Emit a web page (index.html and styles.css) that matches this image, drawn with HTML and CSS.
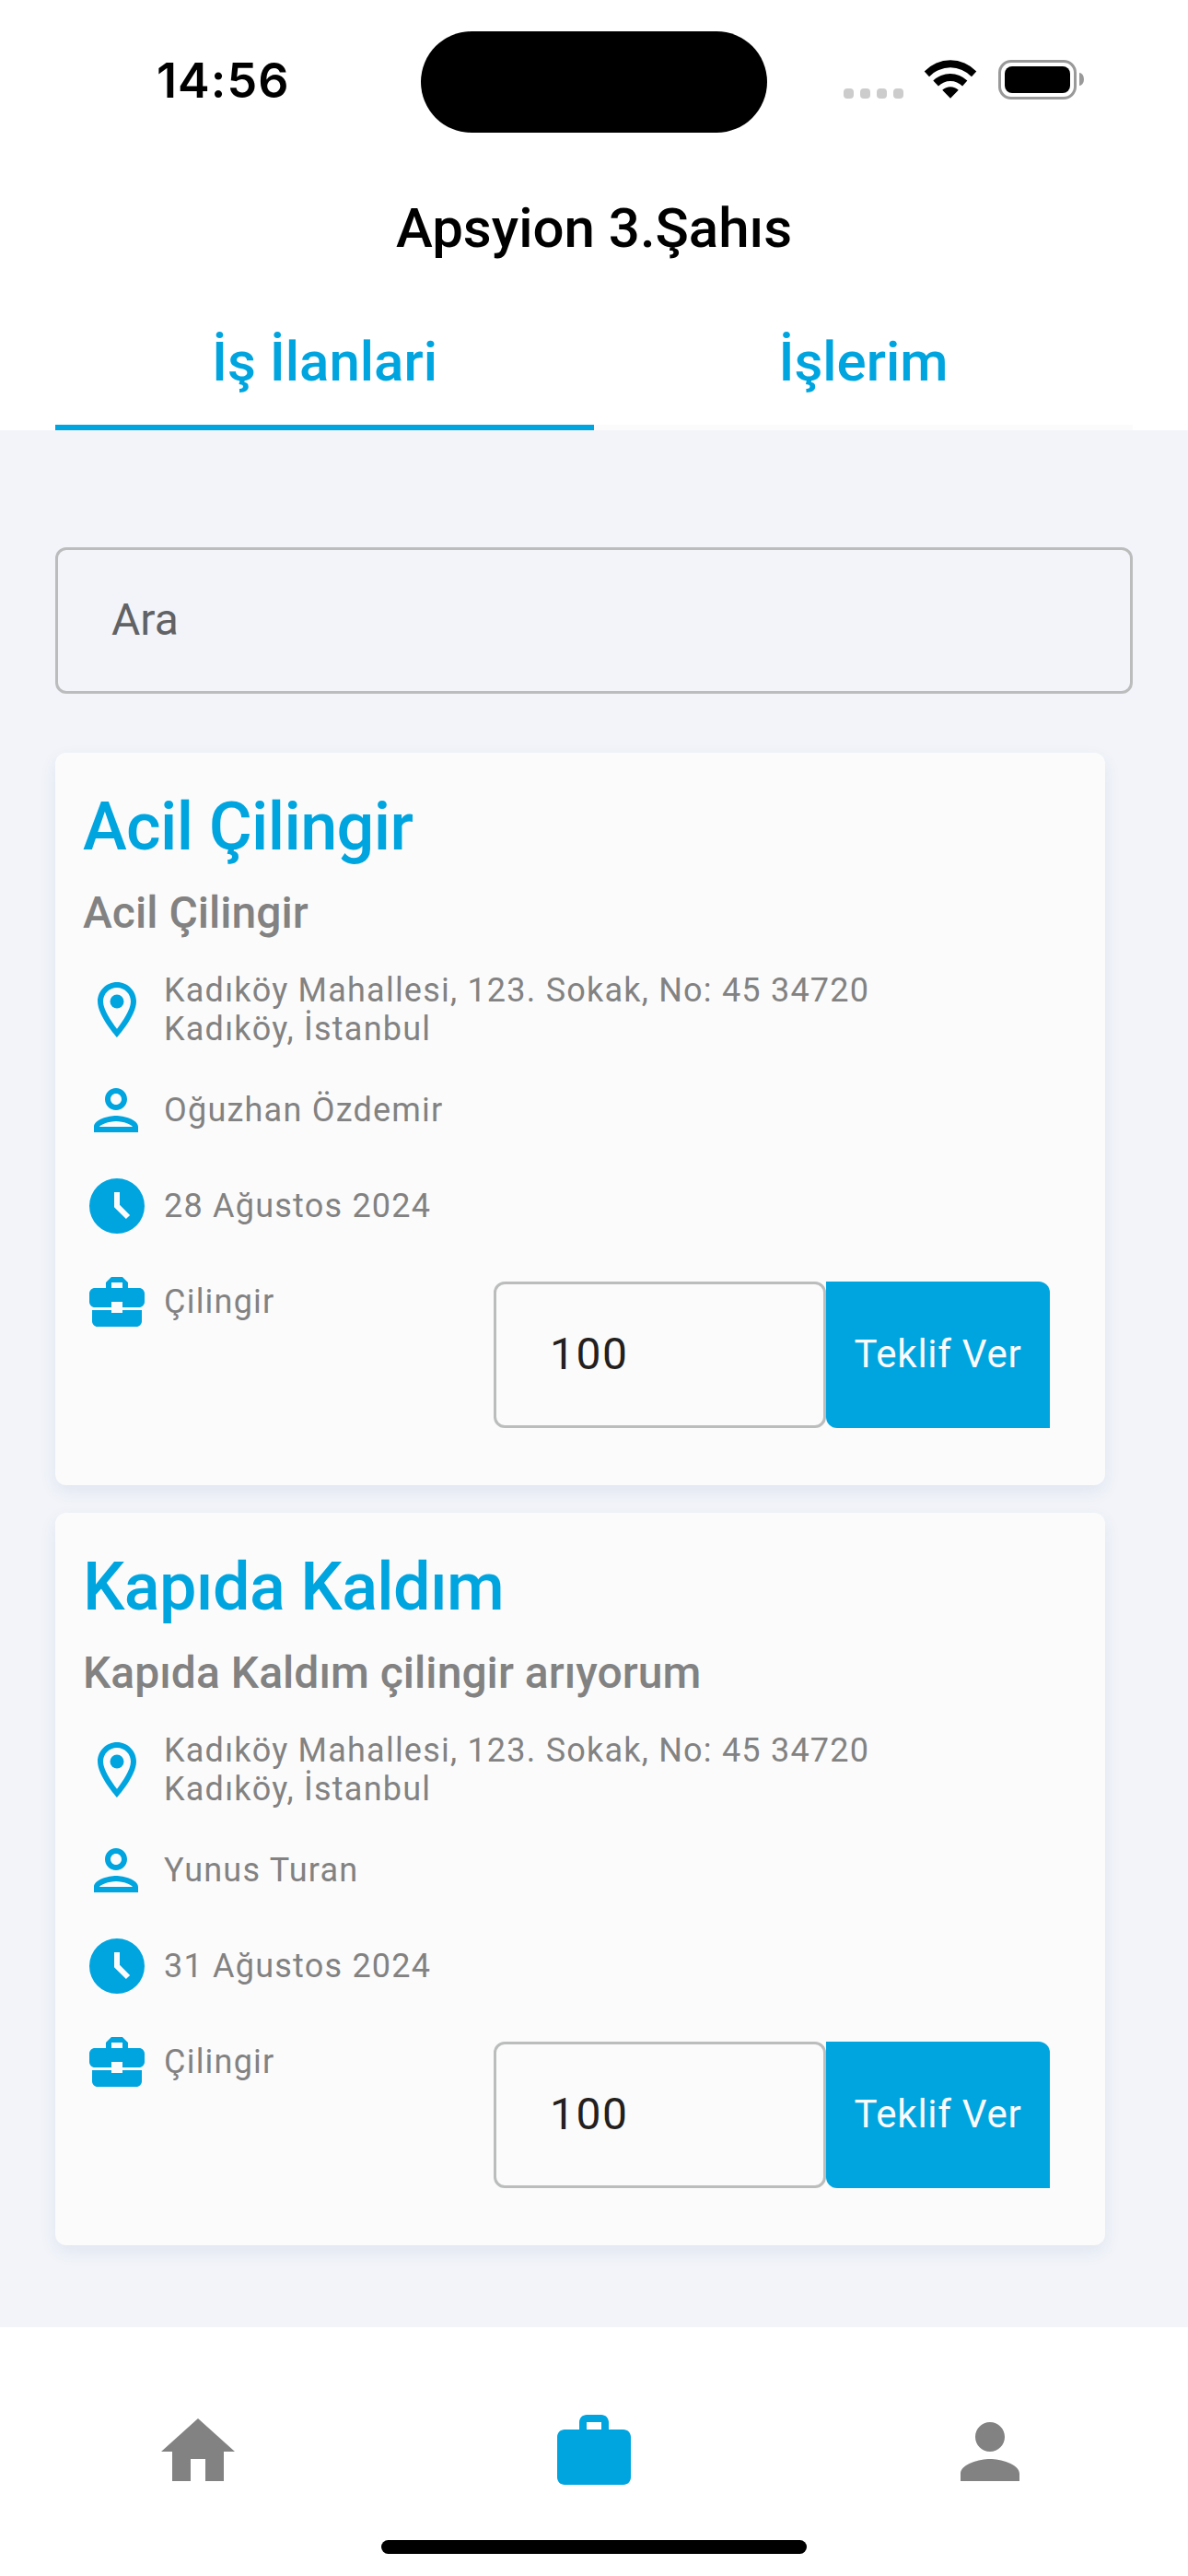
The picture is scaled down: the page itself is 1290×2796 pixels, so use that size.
FILE: index.html
```html
<!DOCTYPE html>
<html lang="tr">
<head>
<meta charset="utf-8">
<title>Apsyion 3.Şahıs</title>
<link rel="stylesheet" href="styles.css">
</head>
<body>
<svg class="sprite" aria-hidden="true">
  <symbol id="place" viewBox="0 0 24 24"><path d="M12 2C8.13 2 5 5.13 5 9c0 5.25 7 13 7 13s7-7.75 7-13c0-3.87-3.13-7-7-7zM7 9c0-2.76 2.24-5 5-5s5 2.24 5 5c0 2.88-2.88 7.19-5 9.88C9.92 16.21 7 11.85 7 9z"/><circle cx="12" cy="9" r="2.5"/></symbol>
  <symbol id="person-outline" viewBox="0 0 24 24"><path d="M12 6c1.1 0 2 .9 2 2s-.9 2-2 2-2-.9-2-2 .9-2 2-2m0 10c2.7 0 5.8 1.29 6 2H6c.23-.72 3.31-2 6-2m0-12C9.79 4 8 5.79 8 8s1.79 4 4 4 4-1.79 4-4-1.79-4-4-4zm0 10c-2.67 0-8 1.34-8 4v2h16v-2c0-2.66-5.33-4-8-4z"/></symbol>
  <symbol id="clock" viewBox="0 0 24 24"><path fill-rule="evenodd" d="M12 2a10 10 0 1 0 0 20a10 10 0 0 0 0-20zM15.3 16.7L16.7 15.3L13 11.6V7h-2v5.4z"/></symbol>
  <symbol id="briefcase" viewBox="0 0 24 24"><path d="M10 16v-1H3.01L3 19c0 1.11.89 2 2 2h14c1.11 0 2-.89 2-2v-4h-7v1h-4zm10-9h-4.01V5l-2-2h-4l-2 2v2H4c-1.1 0-2 .9-2 2v3c0 1.11.89 2 2 2h6v-2h4v2h6c1.1 0 2-.9 2-2V9c0-1.1-.9-2-2-2zm-6 0h-4V5h4v2z"/></symbol>
</svg>

<div class="screen">
  <header class="header">
    <div class="status">
      <div class="time">14:56</div>
      <div class="island"></div>
      <div class="indicators">
        <div class="dots"><i></i><i></i><i></i><i></i></div>
        <svg class="wifi" viewBox="371 75 173 127"><path d="M372 113A117 117 0 0 1 543 113L527 130A96 96 0 0 0 388 130zM401 143A80 80 0 0 1 513 143L497 161A56 56 0 0 0 418 161zM431 174A38 38 0 0 1 484 174L457.500 201z"/></svg>
        <div class="battery"><div class="charge"></div></div>
        <div class="nub"></div>
      </div>
    </div>
    <h1 class="title">Apsyion 3.Şahıs</h1>
    <nav class="tabs">
      <a class="tab active">İş İlanlari</a>
      <a class="tab">İşlerim</a>
    </nav>
  </header>

  <main class="content">
    <input class="search" type="text" placeholder="Ara">

    <article class="card">
      <h2 class="job">Acil Çilingir</h2>
      <h3 class="summary">Acil Çilingir</h3>
      <div class="row address"><svg class="icon"><use href="#place"/></svg><span>Kadıköy Mahallesi, 123. Sokak, No: 45 34720<br>Kadıköy, İstanbul</span></div>
      <div class="row person"><svg class="icon"><use href="#person-outline"/></svg><span>Oğuzhan Özdemir</span></div>
      <div class="row"><svg class="icon"><use href="#clock"/></svg><span>28 Ağustos 2024</span></div>
      <div class="footer">
        <div class="row"><svg class="icon"><use href="#briefcase"/></svg><span>Çilingir</span></div>
        <div class="offer">
          <input class="price" type="text" value="100">
          <button class="bid">Teklif Ver</button>
        </div>
      </div>
    </article>

    <article class="card">
      <h2 class="job">Kapıda Kaldım</h2>
      <h3 class="summary">Kapıda Kaldım çilingir arıyorum</h3>
      <div class="row address"><svg class="icon"><use href="#place"/></svg><span>Kadıköy Mahallesi, 123. Sokak, No: 45 34720<br>Kadıköy, İstanbul</span></div>
      <div class="row person"><svg class="icon"><use href="#person-outline"/></svg><span>Yunus Turan</span></div>
      <div class="row"><svg class="icon"><use href="#clock"/></svg><span>31 Ağustos 2024</span></div>
      <div class="footer">
        <div class="row"><svg class="icon"><use href="#briefcase"/></svg><span>Çilingir</span></div>
        <div class="offer">
          <input class="price" type="text" value="100">
          <button class="bid">Teklif Ver</button>
        </div>
      </div>
    </article>
  </main>

  <footer class="bottom">
    <nav class="nav">
      <a class="item"><svg viewBox="0 0 24 24"><path d="M10 20v-6h4v6h5v-8h3L12 3 2 12h3v8z"/></svg></a>
      <a class="item current"><svg viewBox="0 0 24 24"><path d="M20 6h-4V4c0-1.11-.89-2-2-2h-4c-1.11 0-2 .89-2 2v2H4c-1.11 0-1.99.89-1.990 2L2 19c0 1.11.89 2 2 2h16c1.11 0 2-.89 2-2V8c0-1.11-.89-2-2-2zm-6 0h-4V4h4v2z"/></svg></a>
      <a class="item"><svg viewBox="0 0 24 24"><path d="M12 12c2.21 0 4-1.79 4-4s-1.790-4-4-4-4 1.790-4 4 1.790 4 4 4zm0 2c-2.670 0-8 1.340-8 4v2h16v-2c0-2.660-5.330-4-8-4z"/></svg></a>
    </nav>
    <div class="home-bar"></div>
  </footer>
</div>
</body>
</html>
```
FILE: styles.css
```css
:root {
  --blue: #00a5e0;
  --gray: #828282;
  --line: #bbbcbc;
}

* { box-sizing: border-box; }

body {
  margin: 0;
  font-family: Roboto, "Liberation Sans", sans-serif;
}

h1, h2, h3 { margin: 0; font-weight: 500; }

input, button {
  margin: 0;
  font-family: inherit;
  outline: none;
}

.sprite { display: none; }

.screen {
  width: 1290px;
  height: 2796px;
  display: flex;
  flex-direction: column;
  overflow: hidden;
  background: #f2f4f9;
}

.header {
  height: 467px;
  display: flex;
  flex-direction: column;
  background: #fff;
}

.status {
  height: 177px;
  padding-top: 34px;
  display: grid;
  grid-template-columns: 457px 376px 1fr;
  align-items: start;
}

.time {
  padding: 21px 0 0 170px;
  font: 600 52px/66px Inter, sans-serif;
  letter-spacing: 1.1px;
}

.island {
  height: 110px;
  border-radius: 55px;
  background: #000;
}

.indicators {
  padding: 31px 0 0 83px;
  display: flex;
  align-items: flex-start;
}

.dots {
  display: flex;
  gap: 7px;
  padding-top: 31px;
}

.dots i {
  width: 11px;
  height: 11px;
  border-radius: 4px;
  background: #ccc;
}

.wifi {
  width: 58px;
  height: 42px;
  margin-left: 22px;
}

.battery {
  width: 85px;
  height: 43px;
  margin-left: 23px;
  padding: 4px;
  border: 3px solid #999;
  border-radius: 14px;
}

.charge {
  height: 29px;
  border-radius: 8px;
  background: #000;
}

.nub {
  width: 5px;
  height: 14px;
  margin: 14px 0 0 3px;
  border-radius: 0 5px 5px 0 / 0 7px 7px 0;
  background: #999;
}

.title {
  height: 140px;
  padding-top: 36px;
  font-size: 60px;
  line-height: 70px;
  text-align: center;
}

.tabs {
  flex: 1;
  margin: 0 60px;
  display: grid;
  grid-template-columns: 1fr 1fr;
}

.tab {
  padding-top: 41px;
  border-bottom: 6px solid #fbfbfb;
  color: var(--blue);
  font-size: 60px;
  font-weight: 500;
  line-height: 70px;
  text-align: center;
}

.tab.active { border-color: var(--blue); }

.content {
  flex: 1;
  padding: 127px 60px 0;
  display: flex;
  flex-direction: column;
}

.search {
  width: 100%;
  height: 159px;
  margin-bottom: 64px;
  padding: 0 58px 2px;
  border: 3px solid var(--line);
  border-radius: 12px;
  background: transparent;
  font-size: 48px;
}

.search::placeholder { color: #616265; opacity: 1; }

.card {
  width: 1140px;
  height: 795px;
  margin-bottom: 30px;
  padding: 39px 60px 0 30px;
  border-radius: 12px;
  background: #fbfbfb;
  box-shadow: 0 7px 18px rgba(40, 90, 150, 0.09);
}

.job {
  margin-bottom: 23px;
  color: var(--blue);
  font-size: 72px;
  line-height: 84px;
  letter-spacing: -0.65px;
}

.summary {
  margin-bottom: 35px;
  color: var(--gray);
  font-size: 48px;
  line-height: 56px;
  letter-spacing: 0.03px;
}

.row {
  height: 72px;
  margin: 0 0 32px 1px;
  display: flex;
  align-items: center;
  gap: 15px;
  color: var(--gray);
  font-size: 36px;
  line-height: 42px;
  letter-spacing: 1.22px;
}

.address { height: 84px; margin-bottom: 31px; }

.icon {
  width: 72px;
  height: 72px;
  fill: var(--blue);
}

.person .icon { margin: 0 1px 0 -1px; }

.footer {
  display: flex;
  justify-content: space-between;
  align-items: flex-start;
}

.offer {
  margin-top: 14px;
  display: flex;
}

.price {
  width: 361px;
  height: 159px;
  padding: 0 58px 2px;
  border: 3px solid var(--line);
  border-radius: 12px;
  background: transparent;
  color: #231f20;
  font-size: 48px;
  letter-spacing: 1.5px;
}

.bid {
  width: 243px;
  height: 159px;
  padding: 0 0 2px;
  border: 0;
  border-radius: 0 12px;
  background: var(--blue);
  color: #fbfbfb;
  font-size: 42px;
  letter-spacing: 0.75px;
}

.bottom {
  height: 270px;
  background: #fff;
}

.nav {
  padding-top: 87px;
  display: grid;
  grid-template-columns: repeat(3, 1fr);
  justify-items: center;
}

.item {
  width: 96px;
  height: 96px;
  fill: var(--gray);
}

.item.current { fill: var(--blue); }

.home-bar {
  width: 462px;
  height: 15px;
  margin: 48px auto 0;
  border-radius: 8px;
  background: #000;
}
```
